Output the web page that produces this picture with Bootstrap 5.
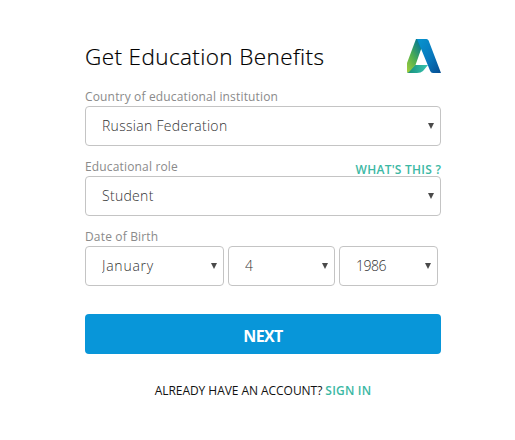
<!DOCTYPE html>
<html lang="en">
<head>
<meta charset="utf-8">
<meta name="viewport" content="width=device-width, initial-scale=1">
<title>Get Education Benefits</title>
<link href="https://cdn.jsdelivr.net/npm/bootstrap@5.3.0/dist/css/bootstrap.min.css" rel="stylesheet">
<style>
body { font-family: "Open Sans", "Noto Sans", sans-serif; color: #111; background: #fff; }
.signup { width: 356px; margin-left: 85px; padding-top: 39px; }
.brand-row { height: 48px; }
.page-title { font-size: 22.5px; font-weight: 300; line-height: 36px; letter-spacing: .4px; color: #000; -webkit-text-stroke: .2px #000; white-space: nowrap; }
.field-head { height: 19px; }
.field-head label { font-size: 12px; line-height: 19px; color: #8a8a8a; letter-spacing: .16px; white-space: nowrap; }
.help { font-size: 12px; line-height: 25px; font-weight: 600; color: #3cb8a4; letter-spacing: .25px; margin-right: -.2px; white-space: nowrap; }
.field-block { height: 70px; }
.picker { position: relative; }
.picker::after { content: ""; position: absolute; right: 7px; top: 17px; border: 3.5px solid transparent; border-top: 6px solid #4a4a4a; border-bottom: 0; pointer-events: none; }
.picker .form-select { height: 40px; padding: 0 16px 0 16px; border: 1px solid #c4c4c4; border-radius: 4px; background: #fff; font-size: 14px; font-weight: 300; color: #333; line-height: 38px; letter-spacing: .3px; }
.month { width: 139px; } .day { width: 107px; } .year { width: 99px; }
.month .form-select { letter-spacing: .75px; }
.year .form-select, .day .form-select { letter-spacing: -.5px; }
.next-btn { height: 40px; margin-top: 17px; background: #0896d9; border-radius: 4px; color: #fff; font-size: 16px; font-weight: 700; letter-spacing: -.6px; line-height: 44px; padding: 0; border: 0; }
.account { margin-top: 27px; font-size: 12px; line-height: 20px; letter-spacing: -.05px; white-space: nowrap; }
.account a { color: #3cb8a4; font-weight: 600; letter-spacing: .2px; }
</style>
<script src="https://cdn.jsdelivr.net/npm/bootstrap@5.3.0/dist/js/bootstrap.bundle.min.js"></script>
</head>
<body>
<main class="signup">
  <header class="brand-row d-flex justify-content-between align-items-start">
    <h1 class="page-title mb-0">Get Education Benefits</h1>
    <svg width="35" height="35" viewBox="0 0 35 35" aria-hidden="true">
      <defs>
        <linearGradient id="lg" x1="0" y1="1" x2=".7" y2="0"><stop offset="0" stop-color="#a5cf3c"/><stop offset=".5" stop-color="#4fae50"/><stop offset="1" stop-color="#087b91"/></linearGradient>
        <linearGradient id="lb" x1="0" y1="0" x2="1" y2="1"><stop offset="0" stop-color="#0795cf"/><stop offset=".55" stop-color="#0878bd"/><stop offset="1" stop-color="#074c91"/></linearGradient>
        <linearGradient id="lt" x1="0" y1="0" x2="1" y2="0"><stop offset="0" stop-color="#168d78"/><stop offset="1" stop-color="#38c5b2"/></linearGradient>
      </defs>
      <path d="M1 34L9 26H22L17 32Q15 34 11 34Z" fill="url(#lt)"/>
      <path d="M10 0H15.5V9L9.5 26L3 33Q1 34.500 1 32V24Z" fill="url(#lg)"/>
      <path d="M11 0H20.5Q22 0 22.600 1.500L35 34H27Q25 34 24.200 32Z" fill="url(#lb)"/>
    </svg>
  </header>

  <div class="field-block">
    <div class="field-head"><label class="d-block" for="country">Country of educational institution</label></div>
    <div class="picker"><select class="form-select" id="country"><option>Russian Federation</option></select></div>
  </div>
  <div class="field-block">
    <div class="field-head d-flex justify-content-between align-items-start"><label for="role">Educational role</label><a href="#" class="help text-decoration-none">WHAT'S THIS ?</a></div>
    <div class="picker"><select class="form-select" id="role"><option>Student</option></select></div>
  </div>
  <div class="field-block">
    <div class="field-head"><label class="d-block" for="month">Date of Birth</label></div>
    <div class="d-flex gap-1">
      <div class="picker month"><select class="form-select" id="month"><option>January</option></select></div>
      <div class="picker day"><select class="form-select" aria-label="Day"><option>4</option></select></div>
      <div class="picker year"><select class="form-select" aria-label="Year"><option>1986</option></select></div>
    </div>
  </div>
  <button type="button" class="btn next-btn w-100 d-block">NEXT</button>
  <p class="account text-center mb-0">ALREADY HAVE AN ACCOUNT? <a href="#" class="text-decoration-none">SIGN IN</a></p>
</main>
</body>
</html>
